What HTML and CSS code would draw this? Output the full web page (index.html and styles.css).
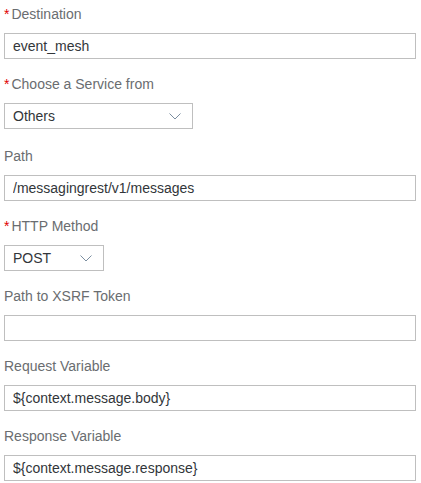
FILE: index.html
```html
<!DOCTYPE html>
<html lang="en">
<head>
<meta charset="utf-8">
<title>Service Task Properties</title>
<link rel="stylesheet" href="styles.css">
</head>
<body>
<form class="form">
  <div class="field">
    <label class="label"><span class="req">*</span>Destination</label>
    <input class="input" type="text" value="event_mesh">
  </div>
  <div class="field field-select">
    <label class="label"><span class="req">*</span>Choose a Service from</label>
    <div class="select select-wide">
      <span class="select-text">Others</span>
      <svg class="chevron" width="12" height="7" viewBox="0 0 12 7"><path d="M0.5 0.5 L6 6 L11.5 0.5" fill="none" stroke="currentColor" stroke-width="1"/></svg>
    </div>
  </div>
  <div class="field">
    <label class="label">Path</label>
    <input class="input" type="text" value="/messagingrest/v1/messages">
  </div>
  <div class="field">
    <label class="label"><span class="req">*</span>HTTP Method</label>
    <div class="select select-narrow">
      <span class="select-text">POST</span>
      <svg class="chevron" width="12" height="7" viewBox="0 0 12 7"><path d="M0.5 0.5 L6 6 L11.5 0.5" fill="none" stroke="currentColor" stroke-width="1"/></svg>
    </div>
  </div>
  <div class="field">
    <label class="label">Path to XSRF Token</label>
    <input class="input" type="text" value="">
  </div>
  <div class="field">
    <label class="label">Request Variable</label>
    <input class="input" type="text" value="${context.message.body}">
  </div>
  <div class="field">
    <label class="label">Response Variable</label>
    <input class="input" type="text" value="${context.message.response}">
  </div>
</form>
</body>
</html>
```
FILE: styles.css
```css
* { box-sizing: border-box; }
html, body {
  margin: 0;
  padding: 0;
  background: #ffffff;
}
body {
  font-family: "Liberation Sans", Arial, sans-serif;
  font-size: 14px;
  color: #32363a;
}
.form {
  display: flex;
  flex-direction: column;
  padding: 0 5px 0 4px;
  margin: 0;
}
.field {
  display: flex;
  flex-direction: column;
  align-items: flex-start;
  height: 70px;
  padding-top: 5px;
}
.field-select {
  height: 72px;
}
.label {
  display: block;
  height: 18px;
  line-height: 18px;
  font-size: 14px;
  color: #6a6d70;
  margin-bottom: 10px;
  white-space: nowrap;
}
.req {
  color: #e00000;
  margin-right: 2px;
}
.input {
  width: 100%;
  height: 26px;
  margin: 0;
  border: 1px solid #bfbfbf;
  border-radius: 0;
  padding: 0 8px;
  font-family: "Liberation Sans", Arial, sans-serif;
  font-size: 14px;
  color: #32363a;
  background: #ffffff;
  outline: none;
}
.select {
  display: flex;
  align-items: center;
  justify-content: space-between;
  height: 26px;
  border: 1px solid #bfbfbf;
  padding: 0 11px 0 8px;
  background: #ffffff;
  color: #32363a;
}
.select-wide { width: 189px; }
.select-narrow { width: 100px; }
.select-text {
  line-height: 24px;
  white-space: nowrap;
}
.chevron {
  color: #7b8ea0;
  display: block;
}
```
